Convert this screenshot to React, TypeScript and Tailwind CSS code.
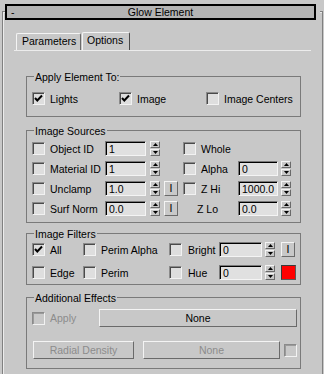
import React from 'react';
import clsx from 'clsx';

const raised =
  'border border-t-[#f4f4f4] border-l-[#f4f4f4] border-b-[#6a6a6a] border-r-[#6a6a6a]';

function CheckBox({ checked, disabled }: { checked?: boolean; disabled?: boolean }) {
  return (
    <div
      className={clsx(
        'flex h-[13px] w-[13px] shrink-0 items-center justify-center border border-t-[#8a8a8a] border-l-[#8a8a8a] border-b-[#f2f2f2] border-r-[#f2f2f2]',
        disabled ? 'bg-[#c8c8c8] shadow-[inset_1px_1px_0_#9a9a9a]' : 'bg-[#dedede] shadow-[inset_1px_1px_0_#4a4a4a]',
      )}
    >
      {checked && (
        <svg width="9" height="9" viewBox="0 0 9 9">
          <path d="M1 4 L3.3 6.5 L8 1.5" stroke="#000" strokeWidth="2" fill="none" />
        </svg>
      )}
    </div>
  );
}

function Field({ value, className }: { value: string; className?: string }) {
  return (
    <div
      className={clsx(
        'flex h-[15px] shrink-0 items-center border border-t-[#7a7a7a] border-l-[#7a7a7a] border-b-[#f4f4f4] border-r-[#f4f4f4] bg-[#e0e0e0] pl-[3px] leading-[12px] shadow-[inset_1px_1px_0_#000]',
        className,
      )}
    >
      {value}
    </div>
  );
}

function Spinner({ className }: { className?: string }) {
  return (
    <div className={clsx('flex h-[15px] w-[10px] shrink-0 flex-col justify-between', className)}>
      <div className={clsx('flex h-[7px] items-center justify-center', raised)}>
        <svg width="5" height="3" viewBox="0 0 5 3">
          <path d="M2.5 0 L5 3 L0 3 Z" fill="#000" />
        </svg>
      </div>
      <div className={clsx('flex h-[7px] items-center justify-center', raised)}>
        <svg width="5" height="3" viewBox="0 0 5 3">
          <path d="M0 0 L5 0 L2.5 3 Z" fill="#000" />
        </svg>
      </div>
    </div>
  );
}

function IButton({ className }: { className?: string }) {
  return (
    <div
      className={clsx(
        'flex h-[15px] w-[14px] shrink-0 items-center justify-center leading-none',
        raised,
        className,
      )}
    >
      I
    </div>
  );
}

function Group({
  title,
  className,
  children,
}: {
  title: string;
  className?: string;
  children: React.ReactNode;
}) {
  return (
    <div className={clsx('relative ml-[23px] w-[275px] border border-[#7a7a7a]', className)}>
      <span className="absolute -top-[6px] left-[7px] bg-[#c8c8c8] px-[1px] leading-[12px]">
        {title}
      </span>
      {children}
    </div>
  );
}

interface SourceRow {
  label: string;
  value: string;
  iButton?: boolean;
  label2: string;
  value2: string;
  check2?: boolean;
}

const SOURCE_ROWS: SourceRow[] = [
  { label: 'Object ID', value: '1', label2: 'Whole', value2: '', check2: true },
  { label: 'Material ID', value: '1', label2: 'Alpha', value2: '0', check2: true },
  { label: 'Unclamp', value: '1.0', iButton: true, label2: 'Z Hi', value2: '1000.0', check2: true },
  { label: 'Surf Norm', value: '0.0', iButton: true, label2: 'Z Lo', value2: '0.0' },
];

export default function App() {
  return (
    <div className="h-[374px] w-[324px] overflow-hidden bg-[#c8c8c8] pt-[11px] pl-[2px] font-['Liberation_Sans',Arial,sans-serif] text-[10.5px] leading-[12px] text-black">
      <div className="h-[363px] w-[321px] border-t border-r border-l border-[#808080] shadow-[inset_1px_1px_0_#ececec]">
        {/* rollout title */}
        <div className="-mt-[8px] ml-[2px] w-[315px] bg-[#c8c8c8] pr-[4px]">
          <div className="grid h-[16px] w-[311px] grid-cols-[20px_1fr_20px] items-center border-2 border-black bg-[#b4b4b4]">
            <span className="pl-[4px]">-</span>
            <span className="text-center">Glow Element</span>
            <span />
          </div>
        </div>

        {/* tabs */}
        <div className="mt-[12px] flex h-[18px] items-end pl-[13px]">
          <div className="h-[17px] w-[65px] rounded-t-[2px] border-t border-r border-l border-t-[#f4f4f4] border-r-[#6a6a6a] border-l-[#f4f4f4] pt-[1px] pl-[5px]">
            Parameters
          </div>
          <div className="ml-[1px] h-[18px] w-[48px] rounded-t-[2px] border-t border-r border-l border-t-[#f4f4f4] border-r-[#4a4a4a] border-l-[#f4f4f4] pt-[1px] pl-[4px]">
            Options
          </div>
        </div>
        <div className="ml-[11px] h-[1px] w-[297px] bg-[#ececec]" />

        {/* Apply Element To */}
        <Group title="Apply Element To:" className="mt-[25px]">
          <div className="flex pt-[15px] pb-[11px] pl-[5px]">
            {[
              { label: 'Lights', checked: true },
              { label: 'Image', checked: true },
              { label: 'Image Centers', checked: false },
            ].map((item) => (
              <div key={item.label} className="flex w-[87px] items-center">
                <CheckBox checked={item.checked} />
                <span className="ml-[5px] whitespace-nowrap">{item.label}</span>
              </div>
            ))}
          </div>
        </Group>

        {/* Image Sources */}
        <Group title="Image Sources" className="mt-[13px]">
          <div className="flex flex-col gap-[5px] pt-[10px] pb-[6px] pl-[5px]">
            {SOURCE_ROWS.map((row) => (
              <div key={row.label} className="flex h-[15px] items-center">
                <CheckBox />
                <span className="w-[60px] shrink-0 pl-[5px] whitespace-nowrap">{row.label}</span>
                <Field value={row.value} className="w-[41px]" />
                <Spinner className="ml-[4px]" />
                {row.iButton ? <IButton className="ml-[4px]" /> : <div className="ml-[4px] w-[14px] shrink-0" />}
                {row.check2 ? (
                  <div className="ml-[5px]">
                    <CheckBox />
                  </div>
                ) : (
                  <div className="ml-[5px] w-[13px] shrink-0" />
                )}
                <span
                  className={clsx(
                    'shrink-0 whitespace-nowrap',
                    row.check2 ? 'w-[42px] pl-[5px]' : '-ml-[4px] w-[46px] pl-[5px]',
                  )}
                >
                  {row.label2}
                </span>
                {row.value2 !== '' && (
                  <>
                    <Field value={row.value2} className="w-[40px]" />
                    <Spinner className="ml-[3px]" />
                  </>
                )}
              </div>
            ))}
          </div>
        </Group>

        {/* Image Filters */}
        <Group title="Image Filters" className="mt-[10px]">
          <div className="flex flex-col gap-[8px] pt-[8px] pb-[4px] pl-[5px]">
            <div className="flex h-[15px] items-center">
              <div className="flex w-[51px] items-center">
                <CheckBox checked />
                <span className="ml-[5px]">All</span>
              </div>
              <div className="flex w-[86px] items-center">
                <CheckBox />
                <span className="ml-[5px] whitespace-nowrap">Perim Alpha</span>
              </div>
              <CheckBox />
              <span className="w-[37px] shrink-0 pl-[6px]">Bright</span>
              <Field value="0" className="w-[43px]" />
              <Spinner className="ml-[3px]" />
              <IButton className="ml-[6px]" />
            </div>
            <div className="flex h-[15px] items-center">
              <div className="flex w-[51px] items-center">
                <CheckBox />
                <span className="ml-[5px]">Edge</span>
              </div>
              <div className="flex w-[86px] items-center">
                <CheckBox />
                <span className="ml-[5px]">Perim</span>
              </div>
              <CheckBox />
              <span className="w-[37px] shrink-0 pl-[6px]">Hue</span>
              <Field value="0" className="w-[43px]" />
              <Spinner className="ml-[3px]" />
              <div className="ml-[6px] h-[15px] w-[15px] shrink-0 border border-t-[#3a3a3a] border-l-[#3a3a3a] border-b-[#5a5a5a] border-r-[#5a5a5a] bg-[#ff0000]" />
            </div>
          </div>
        </Group>

        {/* Additional Effects */}
        <Group title="Additional Effects" className="mt-[12px]">
          <div className="flex flex-col gap-[14px] pt-[11px] pb-[9px]">
            <div className="flex h-[18px] items-center pl-[5px]">
              <CheckBox disabled />
              <span className="w-[54px] shrink-0 pl-[5px] text-[#8c8c8c]">Apply</span>
              <div className={clsx('flex h-[18px] w-[198px] items-center justify-center', raised)}>
                None
              </div>
            </div>
            <div className="flex h-[18px] items-center pl-[6px]">
              <div className={clsx('flex h-[18px] w-[101px] items-center justify-center text-[#8c8c8c]', raised)}>
                Radial Density
              </div>
              <div className={clsx('ml-[9px] flex h-[18px] w-[137px] items-center justify-center text-[#8c8c8c]', raised)}>
                None
              </div>
              <div className="ml-[4px]">
                <CheckBox disabled />
              </div>
            </div>
          </div>
        </Group>
      </div>
    </div>
  );
}
